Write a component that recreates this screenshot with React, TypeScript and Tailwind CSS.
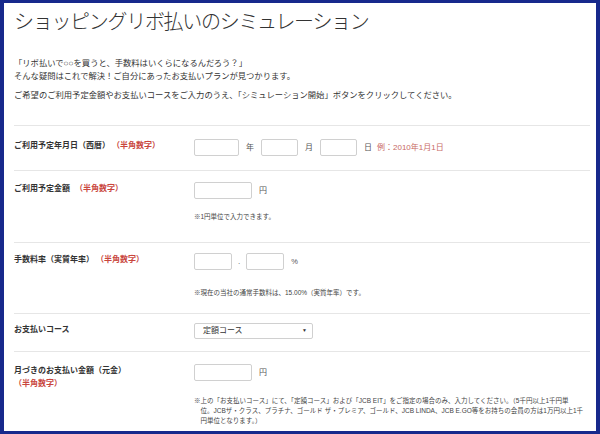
import React from 'react';

const jp = { fontFamily: '"Liberation Sans", "Noto Sans CJK JP", sans-serif' };

function Box({ w }: { w: string }) {
  return <div className={`${w} h-[17px] rounded-[2px] border border-[#d0d0d0] bg-white`} />;
}

function Row({
  label,
  h,
  pt,
  children,
}: {
  label: React.ReactNode;
  h?: string;
  pt: string;
  children: React.ReactNode;
}) {
  return (
    <div className={`flex border-t border-[#e6e6e6] ${h ?? ''} ${pt}`}>
      <div className="w-[180px] shrink-0 text-[8px] font-bold leading-[13px] text-[#333]">{label}</div>
      <div className="flex-1">{children}</div>
    </div>
  );
}

const Red = ({ children, className }: { children: React.ReactNode; className?: string }) => (
  <span className={`text-[#c9463d] ${className ?? ''}`}>{children}</span>
);

export default function App() {
  return (
    <div
      style={jp}
      className="h-[434px] w-[600px] overflow-hidden border-t-[3px] border-r-4 border-b-[3px] border-l-4 border-[#17298c] bg-white"
    >
      <div className="pl-[10px] pr-[6px]">
        <h1 className="mt-[7px] text-[20px] font-light leading-[24px] tracking-[-1.3px] text-[#333]">
          ショッピングリボ払いのシミュレーション
        </h1>

        <div className="mt-[23px] text-[8.3px] leading-[13px] text-[#333]">
          <p>「リボ払いで○○を買うと、手数料はいくらになるんだろう？」</p>
          <p>そんな疑問はこれで解決！ご自分にあったお支払いプランが見つかります。</p>
          <p className="mt-[6px]">
            ご希望のご利用予定金額やお支払いコースをご入力のうえ、「シミュレーション開始」ボタンをクリックしてください。
          </p>
        </div>

        <div className="mt-[23px]">
          <Row
            h="h-[45px]"
            pt="pt-[13px]"
            label={
              <>
                ご利用予定年月日（西暦）<Red className="ml-[6px]">（半角数字）</Red>
              </>
            }
          >
            <div className="flex items-center gap-[7px] text-[8px] text-[#555]">
              <Box w="w-[45px]" />
              <span>年</span>
              <Box w="w-[37px]" />
              <span>月</span>
              <Box w="w-[37px]" />
              <span>日</span>
              <span className="-ml-[2px] text-[#c86a64]">例：2010年1月1日</span>
            </div>
          </Row>

          <Row
            h="h-[72px]"
            pt="pt-[11px]"
            label={
              <>
                ご利用予定金額<Red className="ml-[5px]">（半角数字）</Red>
              </>
            }
          >
            <div className="flex items-center gap-[7px] text-[8px] text-[#555]">
              <Box w="w-[58px]" />
              <span>円</span>
            </div>
            <p className="mt-[13px] text-[6.5px] leading-[10px] text-[#444]">※1円単位で入力できます。</p>
          </Row>

          <Row
            h="h-[71px]"
            pt="pt-[10px]"
            label={
              <>
                手数料率（実質年率）<Red className="ml-[6px]">（半角数字）</Red>
              </>
            }
          >
            <div className="flex items-center gap-[6px] text-[8px] text-[#555]">
              <Box w="w-[38px]" />
              <span>.</span>
              <Box w="w-[38px]" />
              <span className="ml-[1px] text-[7.5px]">%</span>
            </div>
            <p className="mt-[18px] text-[6.5px] leading-[10px] text-[#444]">
              ※現在の当社の通常手数料は、15.00%（実質年率）です。
            </p>
          </Row>

          <Row h="h-[38px]" pt="pt-[9px]" label="お支払いコース">
            <div className="flex h-[16px] w-[119px] items-center justify-between rounded-[2px] border border-[#d0d0d0] bg-white pl-[8px] pr-[5px] text-[8px] text-[#333]">
              <span>定額コース</span>
              <span className="text-[5px]">▼</span>
            </div>
          </Row>

          <Row
            pt="pt-[12px]"
            label={
              <>
                月づきのお支払い金額（元金）
                <br />
                <Red>（半角数字）</Red>
              </>
            }
          >
            <div className="flex items-center gap-[7px] text-[8px] text-[#555]">
              <Box w="w-[58px]" />
              <span>円</span>
            </div>
            <p className="mt-[15px] whitespace-nowrap pl-[1em] -indent-[1em] text-[6.5px] leading-[10px] text-[#444]">
              ※上の「お支払いコース」にて、「定額コース」および「JCB EIT」をご指定の場合のみ、入力してください。（5千円以上1千円単
              <br />
              位。JCBザ・クラス、プラチナ、ゴールド ザ・プレミア、ゴールド、JCB LINDA、JCB E.GO等をお持ちの会員の方は1万円以上1千
              <br />
              円単位となります。）
            </p>
          </Row>
        </div>
      </div>
    </div>
  );
}
